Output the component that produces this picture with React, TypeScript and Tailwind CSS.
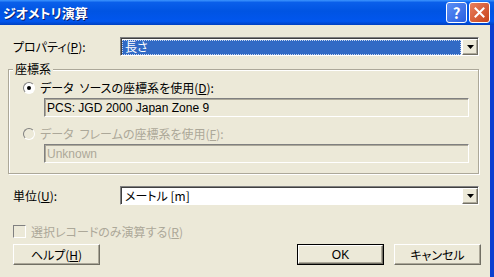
import React from 'react';

const sunken =
  'border-t-[#808080] border-l-[#808080] border-b-white border-r-white border';
const raised =
  'border border-t-white border-l-white border-b-[#716F64] border-r-[#716F64] shadow-[inset_-1px_-1px_0_#ACA899]';

function DropArrow() {
  return (
    <div className={`flex h-[16px] w-[16px] shrink-0 items-center justify-center bg-[#ECE9D8] ${raised}`}>
      <svg width="7" height="4" viewBox="0 0 7 4">
        <path d="M0 0h7L3.5 4z" fill="#000" />
      </svg>
    </div>
  );
}

function Combo({ value, selected }: { value: string; selected?: boolean }) {
  return (
    <div className={`flex h-[19px] w-[359px] items-center bg-white ${sunken} shadow-[inset_1px_1px_0_#404040]`}>
      <div className="flex h-full flex-1 items-center pl-[1px] pr-[1px] pt-[1px]">
        {selected ? (
          <div className="flex h-[15px] flex-1 items-center border border-dotted border-[#C9D8F0] bg-[#316AC5] pl-[2px] text-white">
            {value}
          </div>
        ) : (
          <span className="pl-[3px]">{value}</span>
        )}
      </div>
      <DropArrow />
    </div>
  );
}

function Radio({ checked, disabled }: { checked?: boolean; disabled?: boolean }) {
  return (
    <div
      className={`flex h-[12px] w-[12px] items-center justify-center rounded-full border border-t-[#808080] border-l-[#808080] border-b-white border-r-white ${
        disabled ? 'bg-[#ECE9D8]' : 'bg-white'
      }`}
    >
      {checked && <div className="h-[4px] w-[4px] rounded-full bg-black" />}
    </div>
  );
}

function Field({ value, disabled }: { value: string; disabled?: boolean }) {
  return (
    <div
      className={`ml-[35px] flex h-[19px] w-[425px] items-center pl-[2px] ${sunken} shadow-[inset_1px_1px_0_#ACA899] ${
        disabled ? 'text-[#ACA899]' : 'text-black'
      }`}
    >
      <span className="font-['Liberation_Sans','Noto_Sans_CJK_JP',sans-serif] text-[12px]">{value}</span>
    </div>
  );
}

function Button({ children, isDefault }: { children: React.ReactNode; isDefault?: boolean }) {
  return (
    <div className={isDefault ? 'border border-black' : ''}>
      <div
        className={`flex items-center justify-center bg-[#ECE9D8] ${raised} ${
          isDefault ? 'h-[19px] w-[85px]' : 'h-[21px] w-[87px]'
        }`}
      >
        {children}
      </div>
    </div>
  );
}

export default function App() {
  return (
    <div className="flex h-[277px] w-[494px] flex-col overflow-hidden bg-[#ECE9D8] font-['Noto_Sans_CJK_JP',sans-serif] text-[12px] leading-[14px] text-black [font-feature-settings:'palt']">
      {/* title bar */}
      <div className="flex h-[25px] shrink-0 items-center bg-[linear-gradient(180deg,#3D95FF_0%,#0A5FEA_10%,#0054E3_45%,#0156EE_85%,#0040C0_100%)] pl-[3px] pr-[4px]">
        <span className="flex-1 text-[13px] font-bold text-white [text-shadow:1px_1px_0_#0A1E6E]">ジオメトリ演算</span>
        <div className="flex gap-[2px]">
          <div className="flex h-[21px] w-[21px] items-center justify-center rounded-[3px] border border-white bg-[linear-gradient(135deg,#5C8FF5,#2A5FE0)] text-[15px] font-bold text-white">
            ?
          </div>
          <div className="flex h-[21px] w-[21px] items-center justify-center rounded-[3px] border border-white bg-[linear-gradient(135deg,#E9805E,#C8431A)]">
            <svg width="11" height="11" viewBox="0 0 11 11">
              <path d="M1.5 1.5l8 8M9.5 1.5l-8 8" stroke="#fff" strokeWidth="2" strokeLinecap="square" />
            </svg>
          </div>
        </div>
      </div>

      <div className="flex flex-1 border-r-[4px] border-[#0A3FD0]">
        <div className="flex flex-1 flex-col">
          {/* property */}
          <div className="mt-[12px] flex items-center">
            <span className="w-[120px] pl-[13px]">
              プロパティ(<u>P</u>):
            </span>
            <Combo value="長さ" selected />
          </div>

          {/* group */}
          <div className="relative ml-[8px] mt-[13px] flex h-[105px] w-[471px] flex-col border border-[#ACA899] shadow-[inset_1px_1px_0_#fff,1px_1px_0_#fff]">
            <span className="absolute left-[4px] top-[-8px] bg-[#ECE9D8] px-[2px]">座標系</span>
            <div className="mt-[10px] flex h-[16px] items-center gap-[5px] pl-[14px]">
              <Radio checked />
              <span>
                データ{'\u2002'}ソースの座標系を使用(<u>D</u>):
              </span>
            </div>
            <div className="mt-[2px]">
              <Field value="PCS: JGD 2000 Japan Zone 9" />
            </div>
            <div className="mt-[9px] flex h-[16px] items-center gap-[5px] pl-[14px] text-[#ACA899]">
              <Radio disabled />
              <span>
                データ{'\u2002'}フレームの座標系を使用(<u>F</u>):
              </span>
            </div>
            <div className="mt-[2px]">
              <Field value="Unknown" disabled />
            </div>
          </div>

          {/* unit */}
          <div className="mt-[12px] flex items-center">
            <span className="w-[120px] pl-[13px]">
              単位(<u>U</u>):
            </span>
            <Combo value="メートル [m]" />
          </div>

          {/* checkbox */}
          <div className="mt-[20px] flex h-[13px] items-center gap-[5px] pl-[13px] text-[#ACA899]">
            <div className="h-[13px] w-[13px] border border-t-[#808080] border-l-[#808080] border-b-white border-r-white bg-[#ECE9D8]" />
            <span>
              選択レコードのみ演算する(<u>R</u>)
            </span>
          </div>

          {/* buttons */}
          <div className="mt-[6px] flex items-center pl-[13px]">
            <Button>
              ヘルプ(<u>H</u>)
            </Button>
            <div className="flex-1" />
            <Button isDefault>
              <span className="font-['Liberation_Sans',sans-serif]">OK</span>
            </Button>
            <div className="w-[10px]" />
            <Button>キャンセル</Button>
            <div className="w-[9px]" />
          </div>
        </div>
      </div>
    </div>
  );
}
